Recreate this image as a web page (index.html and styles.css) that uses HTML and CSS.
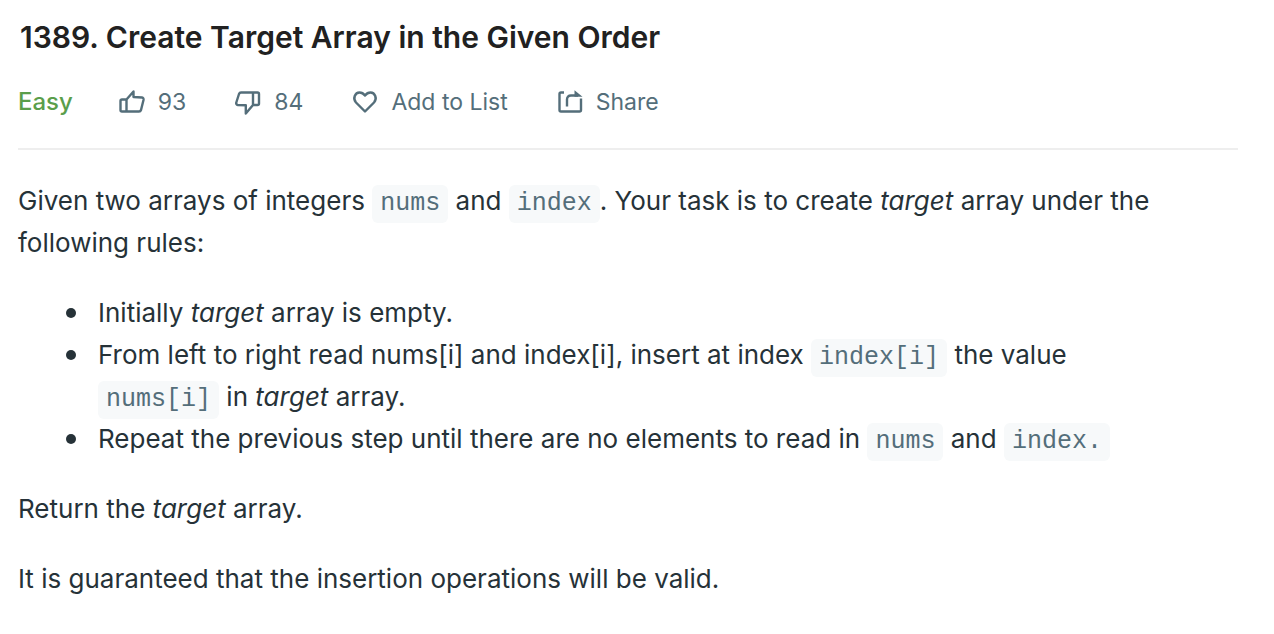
FILE: index.html
```html
<!DOCTYPE html>
<html lang="en">
<head>
<meta charset="utf-8">
<title>1389. Create Target Array in the Given Order</title>
<link rel="stylesheet" href="styles.css">
</head>
<body>
<main class="problem">
  <h1 class="title">1389. Create Target Array in the Given Order</h1>
  <div class="toolbar">
    <span class="difficulty">Easy</span>
    <div class="actions">
      <button class="action" type="button"><svg class="icon" viewBox="0 0 28 28" aria-hidden="true"><path d="M8.500 11.500H4Q2.500 11.500 2.500 13v9Q2.500 23.500 4 23.500H21q1.500 0 2-1.500l2.500-10q.4-2.200-1.500-2.500l-8.500-.5V3.500L8.500 11.500v12"/></svg>93</button>
      <button class="action" type="button"><svg class="icon" viewBox="0 0 28 28" aria-hidden="true"><path d="M19 17h4.500q1.500 0 1.500-1.500V6Q25 4.500 23.500 4.500H7Q5.600 4.500 5 6L2.300 14.500Q1.800 16.700 3.800 17l8 .3V25.500L19 17V4.500"/></svg>84</button>
      <button class="action" type="button"><svg class="icon" viewBox="0 0 28 28" aria-hidden="true"><path d="M14 23.500 5 14.500C1.500 10.500 4 4.500 8.500 4.500c2.500 0 4 1 5.500 3 1.500-2 3-3 5.500-3C24 4.500 26.500 10.500 23 14.500z"/></svg>Add to List</button>
      <button class="action" type="button"><svg class="icon" viewBox="0 0 28 28" aria-hidden="true"><path d="M8 4.500H5Q3.500 4.500 3.500 6v16q0 1.500 1.500 1.500h18.500q1.500 0 1.500-1.500V10.500M11 18.500V11.500q0-4 4-4H22"/><path class="solid" d="M18.500 2.200 26.500 8.700h-8z"/></svg>Share</button>
    </div>
  </div>
  <section class="content">
    <p>Given two arrays of integers <code>nums</code> and <code>index</code>. Your task is to create <em>target</em> array under the following rules:</p>
    <ul>
      <li>Initially <em>target</em> array is empty.</li>
      <li>From left to right read nums[i] and index[i], insert at index <code>index[i]</code> the value <code>nums[i]</code> in <em>target</em> array.</li>
      <li>Repeat the previous step until there are no elements to read in <code>nums</code> and <code>index.</code></li>
    </ul>
    <p>Return the <em>target</em> array.</p>
    <p>It is guaranteed that the insertion operations will be valid.</p>
  </section>
</main>
</body>
</html>
```

FILE: styles.css
```css
* { box-sizing: border-box; }
body { margin: 0; background: #fff; color: #263238; font-family: Inter, "Liberation Sans", sans-serif; }
.problem { padding: 16px 36px 16px 18px; }
.title { margin: 0; padding-left: 2px; font-size: 30px; line-height: 42px; font-weight: 600; color: #212121; }
.toolbar { display: flex; align-items: center; gap: 45px; padding: 25px 0 27px; border-bottom: 2px solid #eee; line-height: 38px; }
.difficulty { color: #5a9e4b; font-size: 24px; font-weight: 500; }
.actions { display: flex; flex-wrap: wrap; gap: 48px; }
.action { display: flex; align-items: center; gap: 12px; padding: 0; border: 0; background: none; color: #546e7a; font: inherit; font-size: 23px; cursor: pointer; }
.icon { width: 28px; height: 28px; fill: none; stroke: currentColor; stroke-width: 2.4; stroke-linejoin: round; }
.solid { fill: currentColor; stroke: none; }
.content { padding-top: 30px; font-size: 26px; line-height: 42px; }
.content p, .content ul { margin: 0 0 28px; }
.content ul { padding: 0 80px; list-style: none; }
.content li::before { content: ""; display: inline-block; width: 10px; height: 10px; margin: 0 22px 0 -32px; border-radius: 50%; background: #263238; vertical-align: 4px; }
code { display: inline-block; margin: -2px 0; padding: 4px 8px; border-radius: 6px; background: #f7f9fa; color: #546e7a; font-family: "Liberation Mono", monospace; font-size: 25px; line-height: 30px; }
```
